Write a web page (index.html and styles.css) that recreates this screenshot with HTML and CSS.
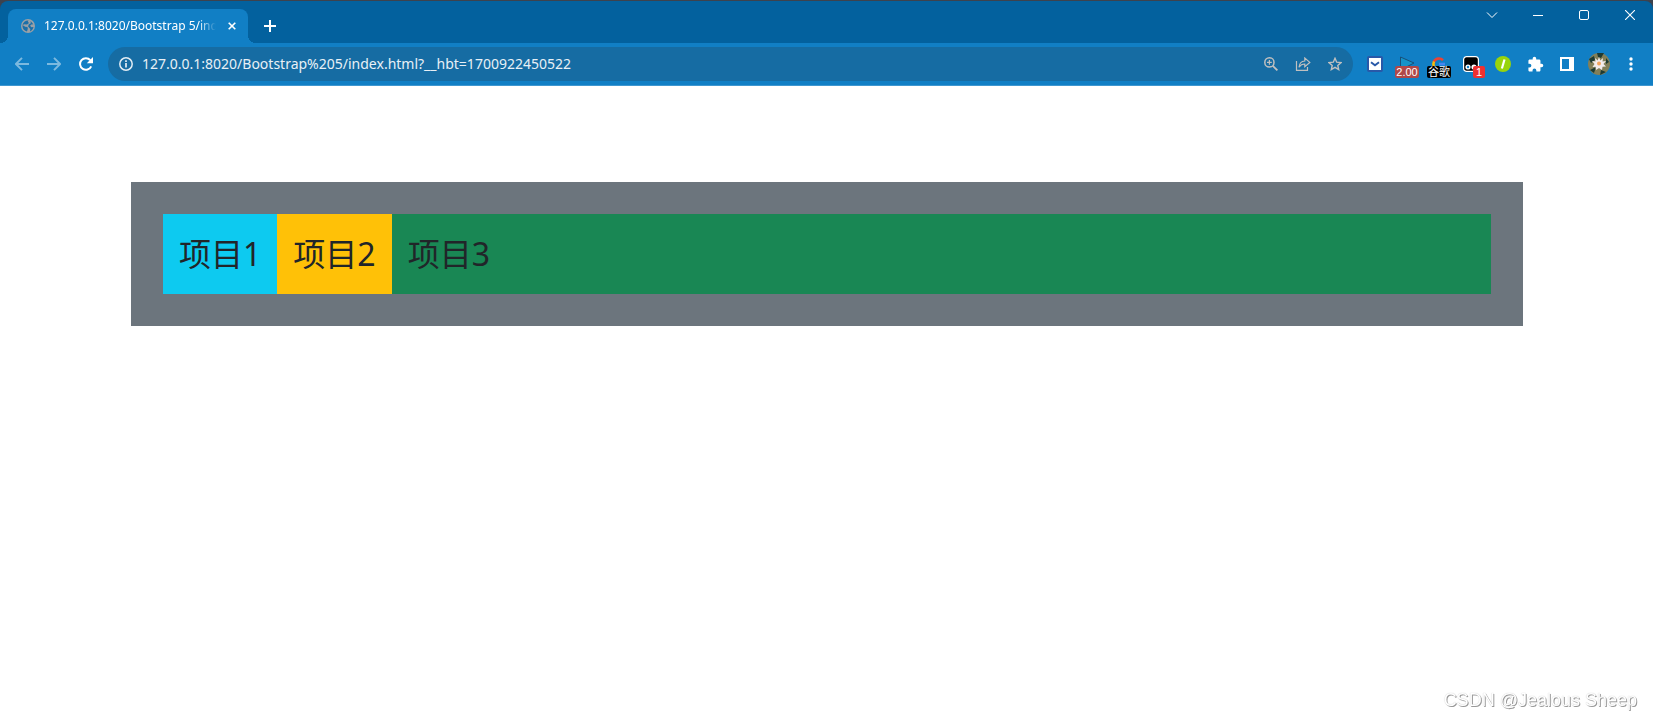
FILE: index.html
```
<!DOCTYPE html>
<html lang="zh-CN">
<head>
    <meta charset="UTF-8">
    <meta name="viewport" content="width=device-width, initial-scale=1.0">
    <title>127.0.0.1:8020/Bootstrap 5/index.html</title>
    <link rel="stylesheet" href="styles.css">
</head>
<body>
    <header class="browser">
        <div class="title-bar">
            <div class="tab">
                <svg width="14" height="14" viewBox="0 0 14 14"><circle cx="7" cy="7" r="7" fill="#9aa0a6"/><path d="M7.500 1.500C4.500 1.300 2 3.200 1.500 6l2.700 1.800 2.300.2.300 1.800-.8 2.700C3.500 12 1.700 10 1.500 7.500V6l2-.8L6 5.500 8 4 6.800 2.800zM9.500 2l2.800 3.200-2 .3-1.200 1.300 1.300 1.400 2.100-.2C12 10.300 10.800 11.800 9 12.400l.3-2.400-2.200-2.600.6-2 2.100-1.200z" fill="#1b6fa8"/></svg>
                <span class="tab-title">127.0.0.1:8020/Bootstrap 5/index.html</span>
                <button class="tab-close" aria-label="关闭"><svg width="8" height="8" viewBox="0 0 8 8"><path d="M.7.7l6.600 6.600M7.300.7L.7 7.300" stroke="#fff" stroke-width="1.600"/></svg></button>
            </div>
            <button class="new-tab" aria-label="新标签页"><svg width="12" height="12" viewBox="0 0 12 12"><path d="M6 0v12M0 6h12" stroke="#fff" stroke-width="2"/></svg></button>
            <div class="window-controls">
                <button aria-label="搜索标签页"><svg width="12" height="12" viewBox="0 0 12 12"><path d="M1 3.500l5 5 5-5" fill="none" stroke="#fff"/></svg></button>
                <button aria-label="最小化"><svg width="10" height="10" viewBox="0 0 10 10"><path d="M0 5.500h10" stroke="#fff"/></svg></button>
                <button aria-label="最大化"><svg width="10" height="10" viewBox="0 0 10 10"><rect x=".5" y=".5" width="9" height="9" rx="1.500" fill="none" stroke="#fff"/></svg></button>
                <button aria-label="关闭窗口"><svg width="10" height="10" viewBox="0 0 10 10"><path d="M0 0l10 10M10 0L0 10" stroke="#fff" stroke-width="1.100"/></svg></button>
            </div>
        </div>

        <div class="toolbar">
            <div class="buttons">
                <button class="dim" aria-label="后退"><svg width="14" height="14" viewBox="0 0 14 14"><path d="M14 7H1.500M7 .8L.9 7 7 13.200" fill="none" stroke="#fff" stroke-width="1.900"/></svg></button>
                <button class="dim" aria-label="前进"><svg width="14" height="14" viewBox="0 0 14 14"><path d="M0 7h12.500M7 .8L13.100 7 7 13.200" fill="none" stroke="#fff" stroke-width="1.900"/></svg></button>
                <button aria-label="刷新"><svg width="14" height="14" viewBox="0 0 14 14"><path d="M12.200 9.300A5.800 5.800 0 1 1 11.300 3.200" fill="none" stroke="#fff" stroke-width="2"/><path d="M14 0v6.200H7.800z" fill="#fff"/></svg></button>
            </div>
            <div class="address-bar">
                <button aria-label="网站信息"><svg width="14" height="14" viewBox="0 0 14 14"><circle cx="7" cy="7" r="6.200" fill="none" stroke="#e3edf4" stroke-width="1.500"/><path d="M7 6v4.600M7 3.300v1.600" stroke="#e3edf4" stroke-width="1.700"/></svg></button>
                <input type="text" aria-label="地址" value="127.0.0.1:8020/Bootstrap%205/index.html?__hbt=1700922450522">
                <button aria-label="缩放"><svg width="14" height="14" viewBox="0 0 14 14"><circle cx="5.400" cy="5.400" r="4.600" fill="none" stroke="#c0c0c0" stroke-width="1.500"/><path d="M5.400 3v4.800M3 5.400h4.800" stroke="#c0c0c0" stroke-width="1.200"/><path d="M8.800 8.800l4.600 4.600" stroke="#c0c0c0" stroke-width="1.800"/></svg></button>
                <button aria-label="分享"><svg width="16" height="14" viewBox="0 0 16 14"><path d="M1.500 4v9.300h11V10" fill="none" stroke="#c0c0c0" stroke-width="1.200"/><path d="M4 10.200C4.300 6.500 6.300 4.300 9.800 4V1l5 4.400-5 4.300V7C7.200 7 5.400 8 4 10.200z" fill="none" stroke="#c0c0c0" stroke-width="1.200"/></svg></button>
                <button aria-label="收藏"><svg width="14" height="14" viewBox="0 0 14 14"><path d="M7 1.300l1.700 3.900 4.300.4-3.200 2.800.9 4.200L7 10.400l-3.700 2.200.9-4.200L1 5.600l4.300-.4z" fill="none" stroke="#c0c0c0" stroke-width="1.400"/></svg></button>
            </div>
            <div class="buttons">
                <button aria-label="邮件"><svg width="16" height="16" viewBox="0 0 16 16"><rect width="16" height="16" rx="2" fill="#2858a8"/><rect x="2" y="2" width="12" height="12" fill="#fff"/><path d="M4 6.200L8 9.200l4-3" fill="none" stroke="#2858a8" stroke-width="2"/></svg></button>
                <button aria-label="播放速度"><svg width="16" height="16" viewBox="0 0 16 16"><path d="M1.500 1v13L15 7z" fill="#1593c8" stroke="#174f78"/></svg><span class="badge speed">2.00</span></button>
                <button aria-label="谷歌翻译"><svg width="16" height="16" viewBox="0 0 16 16" fill="none" stroke-width="2.600"><path d="M2.800 6A5.600 5.600 0 0 1 12 4.200" stroke="#ea4335"/><path d="M3 5.500a6 6 0 0 0 0 5.500" stroke="#fbbc05"/><path d="M8 8h6" stroke="#4285f4"/></svg><span class="badge lang">谷歌</span></button>
                <button aria-label="脚本"><svg width="16" height="16" viewBox="0 0 16 16"><rect x=".6" y=".6" width="14.800" height="14.800" rx="3" fill="#000" stroke="#fff" stroke-width="1.200"/><circle cx="5" cy="11" r="2.600" fill="#fff"/><circle cx="11" cy="11" r="2.600" fill="#fff"/><circle cx="5" cy="11" r="1.200" fill="#117fc5"/></svg><span class="badge count">1</span></button>
                <button aria-label="扩展"><svg width="16" height="16" viewBox="0 0 16 16"><circle cx="8" cy="8" r="8" fill="#98d40b"/><path d="M9.500 3.500l-2.600 9" stroke="#fff" stroke-width="2.200"/></svg></button>
                <button aria-label="扩展程序"><svg width="17" height="17" viewBox="0 0 24 24"><path d="M20.500 11H19V7c0-1.100-.9-2-2-2h-4V3.500a2.500 2.500 0 0 0-5 0V5H4c-1.100 0-2 .9-2 2v3.800h1.500a2.700 2.700 0 0 1 0 5.400H2V20c0 1.100.9 2 2 2h3.800v-1.500a2.700 2.700 0 0 1 5.400 0V22H17c1.100 0 2-.9 2-2v-4h1.500a2.500 2.500 0 0 0 0-5z" fill="#fff"/></svg></button>
                <button aria-label="侧边栏"><svg width="14" height="14" viewBox="0 0 14 14"><path d="M1 1h12v12H1z" fill="none" stroke="#fff" stroke-width="2"/><path d="M9 1h4v12H9z" fill="#fff"/></svg></button>
                <button aria-label="个人资料"><svg width="22" height="22" viewBox="0 0 22 22"><circle cx="11" cy="11" r="11" fill="#827f58"/><path d="M9 0h7l-3 5-3-1zM1 6l5-3 1 4-4 3zM2 17l6-3-2 6zM12 22l1-5 5 2zM18 5l3 4-3 2z" fill="#1d3a32"/><path d="M11 4l1.300 3.500L15 5l-.5 3.500L18 8l-2.500 3L18 13.500l-3.500.3L14 17l-3-2-3 2-.5-3.200L4.500 14 6.500 11 4 8l3.500.5L7 5l2.700 2.500z" fill="#f3ecec"/><circle cx="11" cy="10.500" r="2" fill="#f2a45c"/></svg></button>
                <button aria-label="菜单"><svg width="4" height="14" viewBox="0 0 4 14" fill="#fff"><circle cx="2" cy="2" r="1.700"/><circle cx="2" cy="7" r="1.700"/><circle cx="2" cy="12" r="1.700"/></svg></button>
            </div>
        </div>
    </header>

    <main class="content">
        <div class="flex-box">
            <div class="item info">项目1</div>
            <div class="item warning">项目2</div>
            <div class="item success">项目3</div>
        </div>
    </main>

    <div class="watermark">CSDN @Jealous Sheep</div>
</body>
</html>
```
FILE: styles.css
```
* {
    box-sizing: border-box;
}
body {
    margin: 0;
    background-color: #fff;
    font-family: "Noto Sans", "Noto Sans CJK SC", sans-serif;
    color: #212529;
}
button {
    display: flex;
    align-items: center;
    justify-content: center;
    padding: 0;
    border: none;
    background: none;
}
svg {
    display: block;
    flex: none;
}

/* 浏览器窗口 */
.browser {
    background-color: #3d424d;
    padding-top: 1px;
}
.title-bar {
    display: flex;
    height: 42px;
    padding-left: 8px;
    background-color: #03619e;
    border-radius: 8px 8px 0 0;
}
.tab {
    position: relative;
    display: flex;
    align-items: center;
    width: 240px;
    margin-top: 8px;
    padding: 0 12px 0 13px;
    background-color: #117fc5;
    border-radius: 8px 8px 0 0;
}
.tab::before,
.tab::after {
    content: "";
    position: absolute;
    bottom: 0;
    width: 8px;
    height: 8px;
}
.tab::before {
    left: -8px;
    background: radial-gradient(circle at 0 0, transparent 8px, #117fc5 8px);
}
.tab::after {
    right: -8px;
    background: radial-gradient(circle at 100% 0, transparent 8px, #117fc5 8px);
}
.tab-title {
    flex: 1;
    margin-left: 9px;
    overflow: hidden;
    white-space: nowrap;
    font-size: 12px;
    line-height: 18px;
    color: #fff;
    -webkit-mask-image: linear-gradient(to right, #000 calc(100% - 18px), transparent);
    mask-image: linear-gradient(to right, #000 calc(100% - 18px), transparent);
}
.tab-close {
    width: 8px;
    height: 16px;
    margin-left: 12px;
}
.new-tab {
    width: 28px;
    height: 28px;
    margin: 11px 0 0 8px;
}
.window-controls {
    display: flex;
    margin-left: auto;
}
.window-controls button {
    width: 46px;
    height: 28px;
}

.toolbar {
    display: flex;
    align-items: center;
    gap: 6px;
    height: 43px;
    padding: 0 6px;
    background-color: #117fc5;
    border-bottom: 1px solid #3f97d0;
}
.buttons {
    display: flex;
}
.toolbar button {
    position: relative;
    width: 32px;
    height: 32px;
}
.toolbar .dim {
    opacity: 0.45;
}
.address-bar {
    display: flex;
    flex: 1;
    align-items: center;
    height: 34px;
    padding: 0 2px;
    background-color: #166ca3;
    border-radius: 17px;
}
.address-bar input {
    flex: 1;
    min-width: 0;
    padding: 0;
    border: none;
    outline: none;
    background: none;
    font-family: inherit;
    font-size: 14px;
    line-height: 20px;
    color: #e8f0f6;
}
.badge {
    position: absolute;
    left: 4px;
    right: 4px;
    bottom: 2px;
    height: 12px;
    border-radius: 2px;
    font-size: 11px;
    line-height: 12px;
    text-align: center;
    color: #fff;
}
.speed {
    background-color: #b04848;
}
.lang {
    background-color: #000;
}
.count {
    left: 18px;
    right: 2px;
    background-color: #ef3030;
}

/* 弹性盒子 */
.content {
    padding: 96px 130px 96px 131px;
}
.flex-box {
    display: flex;
    padding: 32px;
    background-color: #6c757d;
}
.item {
    padding: 16px;
    font-size: 32px;
    line-height: 48px;
}
.info {
    background-color: #0dcaf0;
}
.warning {
    background-color: #ffc107;
}
.success {
    flex-grow: 1;
    background-color: #198754;
}

.watermark {
    position: fixed;
    right: 16px;
    bottom: 9px;
    font-family: "Liberation Sans", Arial, sans-serif;
    font-size: 18px;
    line-height: 22px;
    color: #fff;
    text-shadow: 1px 1px 0 #999, 0 0 1px #bbb;
}
```
